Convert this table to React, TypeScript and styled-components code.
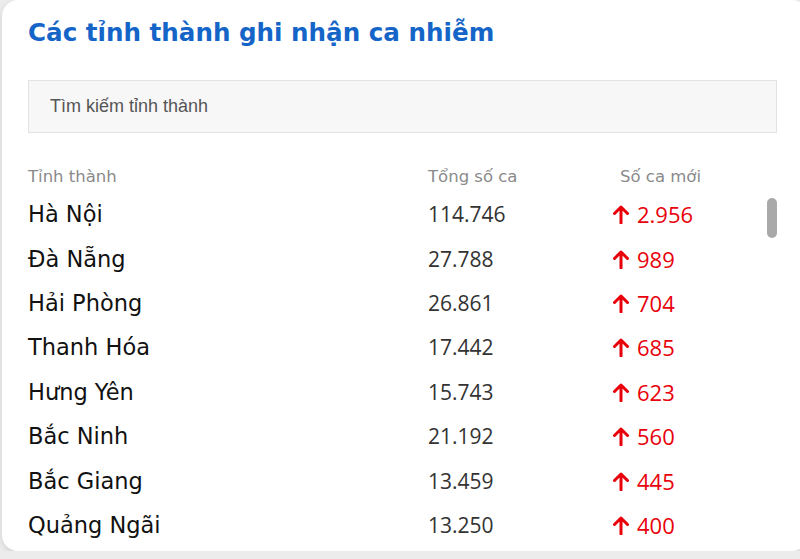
import React from 'react';
import styled, { createGlobalStyle } from 'styled-components';

const GlobalStyle = createGlobalStyle`
    html, body {
        margin: 0;
        padding: 0;
        background: #ececec;
        font-family: "DejaVu Sans", "Noto Sans", sans-serif;
    }
`;

const Card = styled.div`
    box-sizing: border-box;
    width: 806px;
    height: 551px;
    margin: 0 0 0 2px;
    background: #fff;
    border-radius: 16px;
    box-shadow: 0 2px 6px rgba(0, 0, 0, 0.12);
    padding: 14px 31px 0 26px;
    overflow: hidden;
`;

const Title = styled.h2`
    margin: 0;
    font-size: 24.6px;
    font-weight: 700;
    line-height: 38px;
    color: #1565c8;
`;

const Search = styled.input`
    box-sizing: border-box;
    display: block;
    width: 749px;
    height: 53px;
    margin-top: 28px;
    padding: 0 21px;
    background: #f7f7f7;
    border: 1px solid #e3e3e3;
    font-family: "Liberation Sans", Arial, sans-serif;
    font-size: 18px;
    color: #333;
    outline: none;
    &::placeholder {
        color: #555;
    }
`;

const TableArea = styled.div`
    position: relative;
    margin-top: 30px;
`;

const Row = styled.div<{ head?: boolean }>`
    display: grid;
    grid-template-columns: 400px 184px 1fr;
    align-items: center;
    height: ${p => (p.head ? '26px' : '44.4px')};
    font-size: ${p => (p.head ? '16.5px' : '22.5px')};
    color: ${p => (p.head ? '#8a8a8a' : '#111')};
    margin-bottom: ${p => (p.head ? '3px' : '0')};
`;

const Cell = styled.span<{ shift?: number }>`
    padding-left: ${p => p.shift || 0}px;
    white-space: nowrap;
`;

const Total = styled.span`
    font-family: "Open Sans", sans-serif;
    font-size: 21px;
    color: #333;
`;

const NewCases = styled.span`
    display: flex;
    align-items: center;
    gap: 7px;
    font-family: "Open Sans", sans-serif;
    font-size: 22px;
    color: #e8000b;
`;

const Thumb = styled.div`
    position: absolute;
    right: 0;
    top: 35px;
    width: 10px;
    height: 40px;
    border-radius: 5px;
    background: #a9a9a9;
`;

const Arrow = () => (
    <svg width="18" height="20" viewBox="0 0 18 20">
        <path d="M9 19V3M2.5 9.5L9 3L15.5 9.5" stroke="#e8000b" strokeWidth="3" fill="none" strokeLinecap="round" strokeLinejoin="round" />
    </svg>
);

const rows = [
    { name: 'Hà Nội', total: '114.746', added: '2.956' },
    { name: 'Đà Nẵng', total: '27.788', added: '989' },
    { name: 'Hải Phòng', total: '26.861', added: '704' },
    { name: 'Thanh Hóa', total: '17.442', added: '685' },
    { name: 'Hưng Yên', total: '15.743', added: '623' },
    { name: 'Bắc Ninh', total: '21.192', added: '560' },
    { name: 'Bắc Giang', total: '13.459', added: '445' },
    { name: 'Quảng Ngãi', total: '13.250', added: '400' },
];

export default function App() {
    return (
        <>
            <GlobalStyle />
            <Card>
                <Title>Các tỉnh thành ghi nhận ca nhiễm</Title>
                <Search type="text" placeholder="Tìm kiếm tỉnh thành" />
                <TableArea>
                    <Row head>
                        <Cell>Tỉnh thành</Cell>
                        <Cell>Tổng số ca</Cell>
                        <Cell shift={8}>Số ca mới</Cell>
                    </Row>
                    {rows.map(r => (
                        <Row key={r.name}>
                            <Cell>{r.name}</Cell>
                            <Total>{r.total}</Total>
                            <NewCases>
                                <Arrow />
                                {r.added}
                            </NewCases>
                        </Row>
                    ))}
                    <Thumb />
                </TableArea>
            </Card>
        </>
    );
}
